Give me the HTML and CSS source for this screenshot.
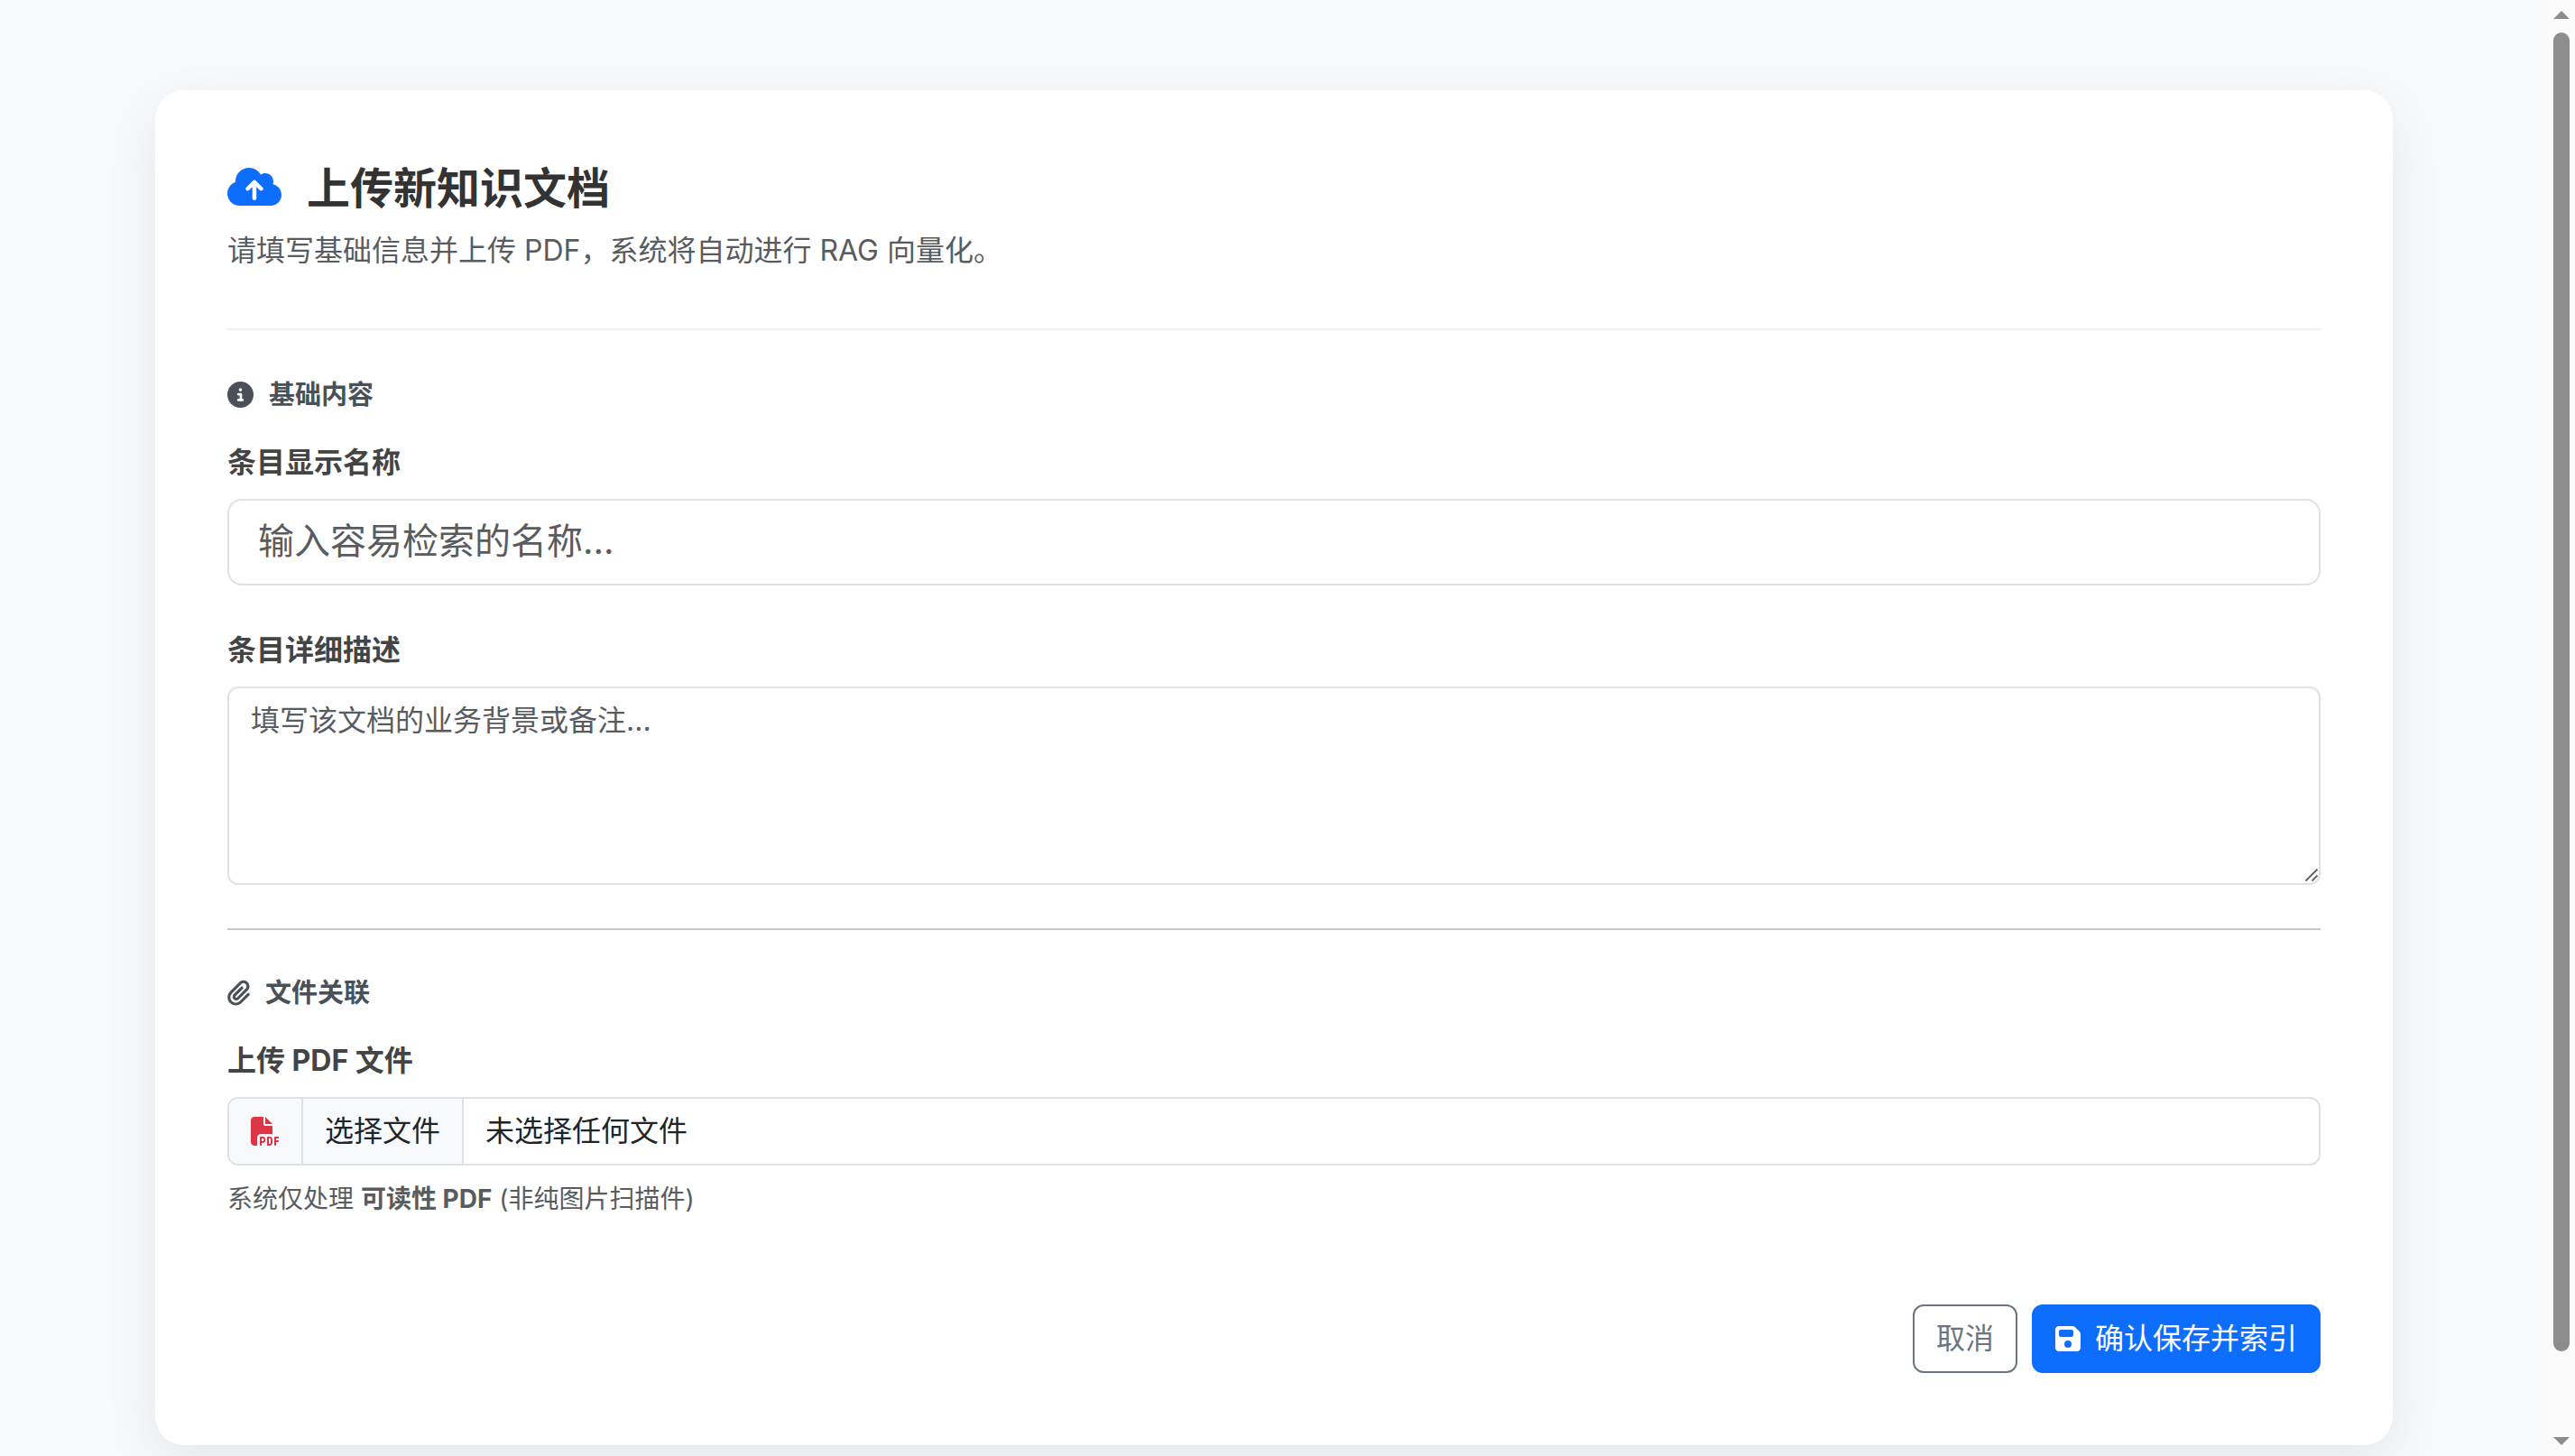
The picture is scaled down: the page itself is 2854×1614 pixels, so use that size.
FILE: index.html
```html
<!DOCTYPE html>
<html lang="zh-CN">
<head>
<meta charset="utf-8">
<title>上传新知识文档</title>
<link rel="stylesheet" href="styles.css">
</head>
<body>
<div class="viewport">
  <main class="page">
    <form class="card">
      <header class="card-head">
        <h1 class="title">
          <svg class="icon-cloud" viewBox="0 0 640 512"><path d="M144 480C64.5 480 0 415.5 0 336c0-62.8 40.2-116.2 96.2-135.9c-.1-2.7-.2-5.4-.2-8.1c0-88.4 71.6-160 160-160c59.3 0 111 32.2 138.7 80.2C409.9 102 428.3 96 448 96c53 0 96 43 96 96c0 12.2-2.3 23.8-6.4 34.6C596 238.4 640 290.1 640 352c0 70.7-57.3 128-128 128H144zm79-217c-9.4 9.4-9.4 24.6 0 33.9s24.6 9.4 33.9 0l39-39V392c0 13.3 10.7 24 24 24s24-10.7 24-24V257.9l39 39c9.4 9.4 24.6 9.4 33.9 0s9.4-24.6 0-33.9l-80-80c-9.4-9.4-24.6-9.4-33.9 0l-80 80z"/></svg>
          <span>上传新知识文档</span>
        </h1>
        <p class="subtitle">请填写基础信息并上传 PDF，系统将自动进行 RAG 向量化。</p>
      </header>

      <section class="section">
        <h2 class="section-title">
          <svg class="icon-section" viewBox="0 0 512 512"><path d="M256 512A256 256 0 1 0 256 0a256 256 0 1 0 0 512zM216 336h24V272H216c-13.3 0-24-10.7-24-24s10.7-24 24-24h48c13.3 0 24 10.7 24 24v88h8c13.3 0 24 10.7 24 24s-10.7 24-24 24H216c-13.3 0-24-10.7-24-24s10.7-24 24-24zm40-208a32 32 0 1 1 0 64 32 32 0 1 1 0-64z"/></svg>
          <span>基础内容</span>
        </h2>
        <div class="field">
          <label class="label" for="name">条目显示名称</label>
          <input class="input-lg" id="name" type="text" placeholder="输入容易检索的名称...">
        </div>
        <div class="field field-last">
          <label class="label" for="desc">条目详细描述</label>
          <div class="textarea-wrap">
            <textarea class="textarea" id="desc" rows="4" placeholder="填写该文档的业务背景或备注..."></textarea>
            <svg class="grip" viewBox="0 0 16 16"><path d="M1.5 14.5 14.5 1.5M8.5 14.5 14.5 8.5"/></svg>
          </div>
        </div>
      </section>

      <hr class="rule">

      <section class="section">
        <h2 class="section-title">
          <svg class="icon-clip" viewBox="0 0 448 512"><path d="M364.2 83.8c-24.4-24.4-64-24.4-88.4 0l-184 184c-42.1 42.1-42.1 110.3 0 152.4s110.3 42.1 152.4 0l152-152c10.9-10.9 28.7-10.9 39.6 0s10.9 28.7 0 39.6l-152 152c-64 64-167.6 64-231.6 0s-64-167.6 0-231.6l184-184c46.3-46.3 121.3-46.3 167.6 0s46.3 121.3 0 167.6l-176 176c-28.6 28.6-75 28.6-103.6 0s-28.6-75 0-103.6l144-144c10.9-10.9 28.7-10.9 39.6 0s10.9 28.7 0 39.6l-144 144c-6.7 6.7-6.7 17.7 0 24.4s17.7 6.7 24.4 0l176-176c24.4-24.4 24.4-64 0-88.4z"/></svg>
          <span>文件关联</span>
        </h2>
        <div class="field field-file">
          <div class="label">上传 PDF 文件</div>
          <div class="file-group">
            <span class="file-icon">
              <svg class="icon-pdf" viewBox="0 0 512 512"><path d="M0 64C0 28.7 28.7 0 64 0H224V128c0 17.7 14.3 32 32 32H384V304H176c-35.3 0-64 28.7-64 64V512H64c-35.3 0-64-28.7-64-64V64zm384 64H256V0L384 128zM176 352h32c30.9 0 56 25.1 56 56s-25.1 56-56 56H192v32c0 8.8-7.2 16-16 16s-16-7.2-16-16V448 368c0-8.8 7.2-16 16-16zm32 80c13.3 0 24-10.7 24-24s-10.7-24-24-24H192v48h16zm96-80h32c26.5 0 48 21.5 48 48v64c0 26.5-21.5 48-48 48H304c-8.8 0-16-7.2-16-16V368c0-8.8 7.2-16 16-16zm32 128c8.8 0 16-7.2 16-16V400c0-8.8-7.2-16-16-16H320v96h16zm80-112c0-8.8 7.2-16 16-16h48c8.8 0 16 7.2 16 16s-7.2 16-16 16H448v32h32c8.8 0 16 7.2 16 16s-7.2 16-16 16H448v48c0 8.8-7.2 16-16 16s-16-7.2-16-16V432 368z"/></svg>
            </span>
            <span class="file-button">选择文件</span>
            <span class="file-name">未选择任何文件</span>
          </div>
          <p class="hint">系统仅处理 <strong>可读性 PDF</strong> (非纯图片扫描件)</p>
        </div>
      </section>

      <footer class="actions">
        <button class="btn btn-outline" type="button">取消</button>
        <button class="btn btn-primary" type="button">
          <svg class="icon-save" viewBox="0 0 448 512"><path d="M64 32C28.7 32 0 60.7 0 96V416c0 35.3 28.7 64 64 64H384c35.3 0 64-28.7 64-64V173.3c0-17-6.7-33.3-18.7-45.3L352 50.7C340 38.7 323.7 32 306.7 32H64zm0 96c0-17.7 14.3-32 32-32H288c17.7 0 32 14.3 32 32v64c0 17.7-14.3 32-32 32H96c-17.7 0-32-14.3-32-32V128zM224 288a64 64 0 1 1 0 128 64 64 0 1 1 0-128z"/></svg>
          <span>确认保存并索引</span>
        </button>
      </footer>
    </form>
  </main>
  <aside class="scrollbar" aria-hidden="true">
    <span class="arrow arrow-up"></span>
    <span class="thumb"></span>
    <span class="arrow arrow-down"></span>
  </aside>
</div>
</body>
</html>
```

FILE: styles.css
```css
* { box-sizing: border-box; }
html, body { margin: 0; height: 100%; overflow: hidden; }
body {
  background: #f8f9fa;
  color: #212529;
  font-family: "Inter", "Noto Sans CJK SC", sans-serif;
  font-size: 32px;
  line-height: 1.5;
}
.viewport { display: flex; height: 1614px; overflow: hidden; }
.page { flex: 1; display: flex; justify-content: center; align-items: flex-start; padding-top: 100px; min-width: 0; }
.card {
  width: 2480px;
  flex: none;
  background: #fff;
  border-radius: 32px;
  padding: 80px;
  box-shadow: 0 20px 60px rgba(0,0,0,.08);
}
.card-head { border-bottom: 2px solid #f0f0f0; padding-bottom: 62px; margin-bottom: 48px; }
.title { display: flex; align-items: center; gap: 28px; margin: 0 0 16px; font-size: 48px; line-height: 58px; font-weight: 700; color: #333; }
.icon-cloud { width: 60px; height: 48px; margin-bottom: 4px; fill: #0d6efd; flex: none; }
.subtitle { margin: 0; font-size: 32px; line-height: 48px; color: #595c5f; }

.section-title { display: flex; align-items: center; gap: 17px; margin: 0 0 27px; font-size: 29px; line-height: 48px; font-weight: 700; color: #495057; }
.icon-section { width: 29px; height: 29px; margin-bottom: 2px; fill: #495057; flex: none; }
.icon-clip { width: 25px; height: 29px; margin-bottom: 2px; fill: #495057; flex: none; }

.field { margin-bottom: 48px; }
.field-file { margin-bottom: 0; }
.label { display: block; font-size: 32px; line-height: 48px; font-weight: 700; color: #444; margin-bottom: 16px; }

.input-lg {
  display: block; width: 100%; height: 96px; padding: 14px 32px 18px;
  font: inherit; font-size: 40px; line-height: 60px; color: #212529;
  border: 2px solid #dee2e6; border-radius: 16px; background: #fff; outline: none;
}
.input-lg::placeholder, .textarea::placeholder { color: #595c5f; opacity: 1; }

.textarea-wrap { position: relative; }
.textarea {
  display: block; width: 100%; height: 220px; padding: 12px 24px;
  font: inherit; font-size: 32px; line-height: 48px; color: #212529;
  border: 2px solid #dee2e6; border-radius: 12px; background: #fff; outline: none; resize: none;
}
.grip { position: absolute; right: 2px; bottom: 3px; width: 16px; height: 16px; fill: none; stroke: #666; stroke-width: 2; }

.rule { border: 0; height: 2px; margin: 0 0 46px; background: #c6c7c8; }

.file-group { display: flex; height: 76px; border: 2px solid #dee2e6; border-radius: 12px; overflow: hidden; background: #fff; }
.file-icon { display: flex; align-items: center; justify-content: center; width: 82px; background: #f8f9fa; border-right: 2px solid #dee2e6; flex: none; }
.icon-pdf { width: 32px; height: 32px; fill: #dc3545; }
.file-button { display: flex; align-items: center; padding: 0 24px; background: #f8f9fa; border-right: 2px solid #dee2e6; margin-right: 24px; }
.file-name { display: flex; align-items: center; }
.hint { margin: 16px 0 0; font-size: 28px; line-height: 42px; color: #595c5f; }
.hint strong { font-weight: 700; }

.actions { display: flex; justify-content: flex-end; gap: 16px; margin-top: 96px; }
.btn { display: inline-flex; align-items: center; height: 76px; padding: 0 24px; font: inherit; border-radius: 12px; }
.btn-outline { background: #fff; color: #6c757d; border: 2px solid #6c757d; }
.btn-primary { background: #0d6efd; color: #fff; border: 2px solid #0d6efd; gap: 16px; }
.icon-save { width: 28px; height: 32px; fill: #fff; flex: none; }

.scrollbar { width: 30px; flex: none; background: #fafafa; display: flex; flex-direction: column; align-items: center; padding: 12px 0; }
.arrow { width: 0; height: 0; border-left: 9px solid transparent; border-right: 9px solid transparent; flex: none; }
.arrow-up { border-bottom: 9px solid #8c8c8c; }
.arrow-down { border-top: 9px solid #8c8c8c; margin-top: auto; }
.thumb { width: 18px; height: 1462px; margin-top: 15px; border-radius: 9px; background: #8c8c8c; flex: none; }
```
